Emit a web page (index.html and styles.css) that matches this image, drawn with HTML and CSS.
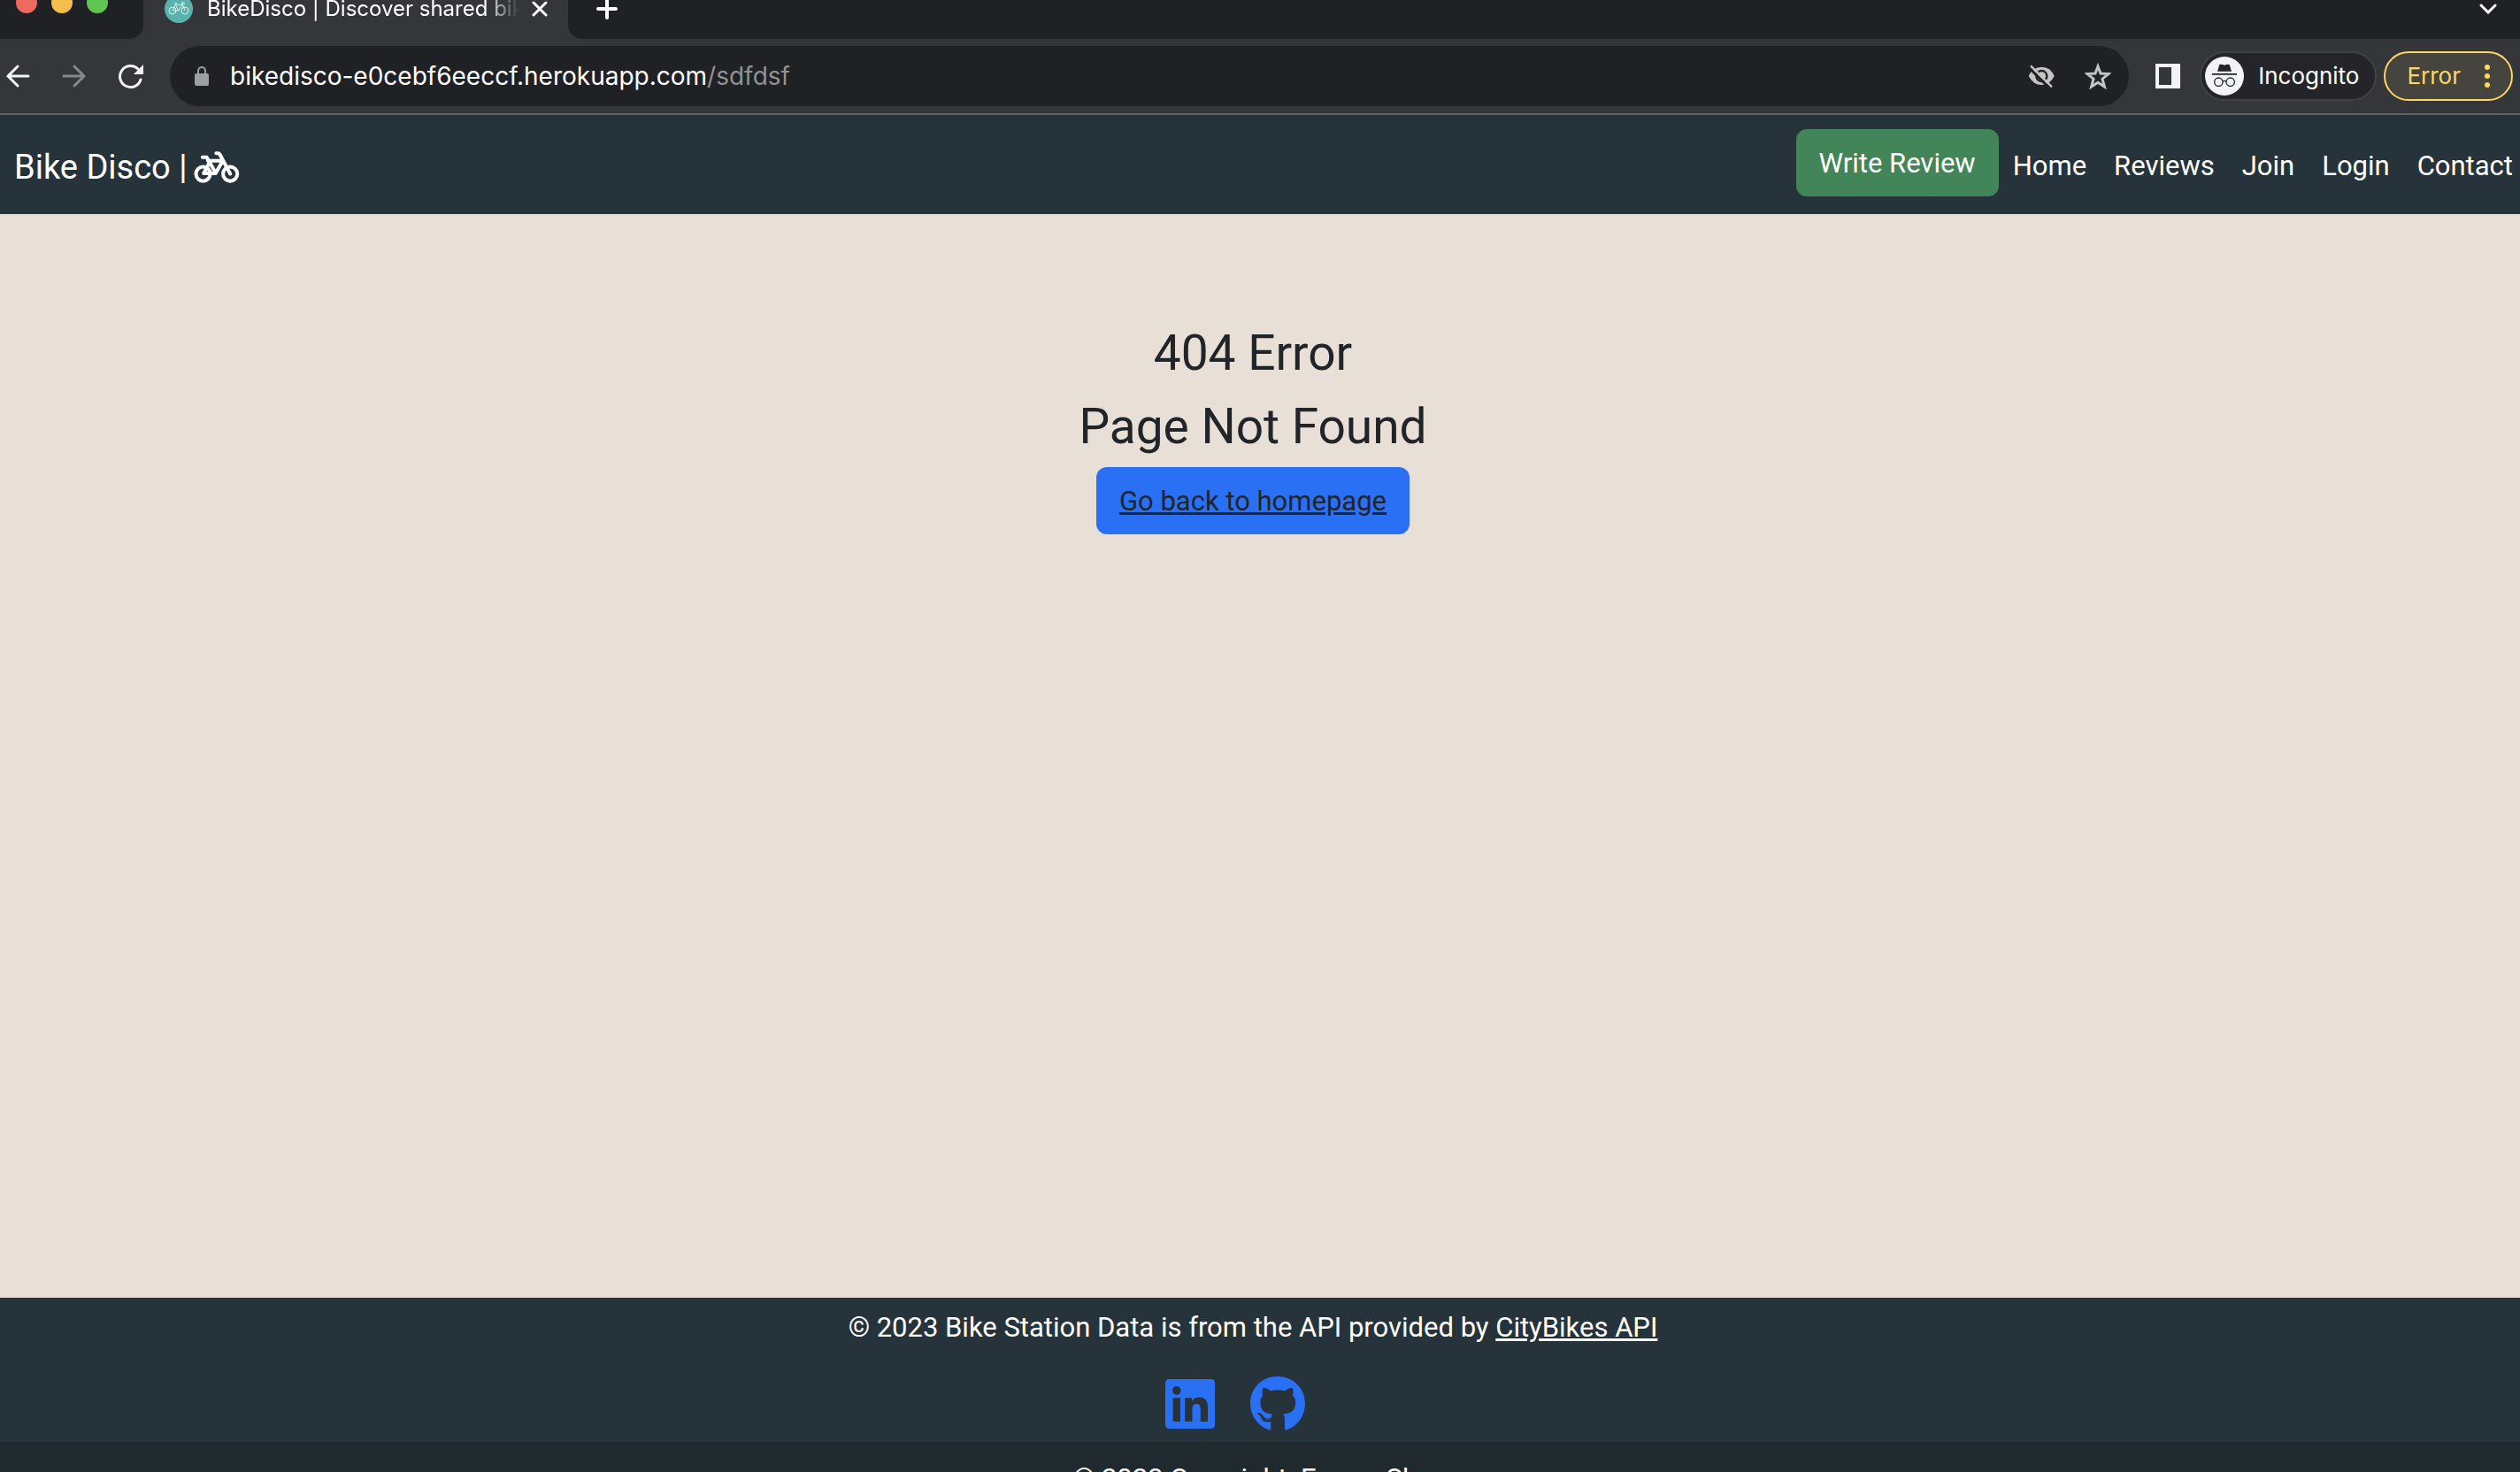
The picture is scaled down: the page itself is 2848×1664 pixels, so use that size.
FILE: index.html
```html
<!DOCTYPE html>
<html lang="en">
<head>
<meta charset="utf-8">
<title>BikeDisco | Discover shared bikes</title>
<link rel="stylesheet" href="styles.css">
</head>
<body>
<div class="window">
  <div class="tabstrip">
    <div class="tabstrip-lead">
      <div class="lights">
        <span class="light light-close"></span>
        <span class="light light-min"></span>
        <span class="light light-max"></span>
      </div>
    </div>
    <div class="tab">
      <svg class="favicon" viewBox="0 0 96 96" aria-hidden="true">
        <circle cx="48" cy="48" r="48" fill="#5bb1ac"/>
        <g fill="none" stroke="#e4f3f1" stroke-width="3">
          <circle cx="27" cy="54" r="12"/><circle cx="69" cy="54" r="12"/>
          <path d="M27 54l10-20h24L47 54H27M37 34l10 20M33 29h10M57 27h9q4 4-1 6M59 27l10 27"/>
        </g>
      </svg>
      <span class="tab-title">BikeDisco | Discover shared bikes</span>
      <button class="icon-button" aria-label="Close tab">
        <svg class="icon-close" viewBox="0 0 18 18"><path d="M2 2l14 14M16 2L2 16"/></svg>
      </button>
    </div>
    <div class="tabstrip-rest">
      <button class="icon-button" aria-label="New tab">
        <svg class="icon-plus" viewBox="0 0 24 24"><path d="M12 2v20M2 12h20"/></svg>
      </button>
      <button class="icon-button" aria-label="Search tabs">
        <svg class="icon-chevron" viewBox="0 0 20 12"><path d="M2 2l8 8 8-8"/></svg>
      </button>
    </div>
  </div>

  <div class="toolbar">
    <div class="history">
      <button class="icon-button" aria-label="Back">
        <svg class="icon-arrow" viewBox="0 0 28 28"><path d="M26 14H3M14 3L3 14l11 11"/></svg>
      </button>
      <button class="icon-button" aria-label="Forward" disabled>
        <svg class="icon-arrow icon-dim" viewBox="0 0 28 28"><path d="M2 14h23M14 3l11 11-11 11"/></svg>
      </button>
      <button class="icon-button" aria-label="Reload">
        <svg class="icon-reload" viewBox="0 0 28 28"><path class="stroke" d="M25 18A12 12 0 1 1 22 6"/><path class="fill" d="M28 1v11H17z"/></svg>
      </button>
    </div>
    <div class="address">
      <svg class="icon-lock" viewBox="0 0 16 22" aria-hidden="true"><path class="stroke" d="M4 9V5a4 4 0 0 1 8 0v4"/><rect class="fill" y="8" width="16" height="14" rx="2"/></svg>
      <span class="url">bikedisco-e0cebf6eeccf.herokuapp.com<span class="url-path">/sdfdsf</span></span>
      <button class="icon-button" aria-label="Third-party cookies blocked">
        <svg class="icon-eye" viewBox="0 0 90 78">
          <path class="fill" d="M2 39Q16 8 46 8t43 31Q74 69 46 69T2 39z"/>
          <circle cx="46" cy="39" r="18" fill="none" stroke="#202124" stroke-width="7"/>
          <path d="M2 9l72 72" stroke="#202124" stroke-width="9"/>
          <path class="stroke" d="M9 4l72 72"/>
        </svg>
      </button>
      <button class="icon-button" aria-label="Bookmark this page">
        <svg class="icon-star" viewBox="0 0 30 30"><path d="M15 4l3 8 9 .6-7 5.600 2.400 8.800-7.400-4.800-7.400 4.800L10 18.200 3 12.600l9-.6z"/></svg>
      </button>
    </div>
    <button class="icon-button" aria-label="Side panel">
      <svg class="icon-panel" viewBox="0 0 28 28"><path fill-rule="evenodd" d="M0 0h28v28H0zM4 4v20h14V4z"/></svg>
    </button>
    <div class="pills">
      <button class="pill pill-incognito">
        <svg class="avatar" viewBox="0 0 132 132" aria-hidden="true">
          <circle cx="66" cy="66" r="66" fill="#f1f3f4"/>
          <path fill="#252428" d="M42 50l7-23q8-2 17 2 9-4 17-2l7 23zM24 57h84v5H24z"/>
          <g fill="none" stroke="#252428" stroke-width="4"><circle cx="46" cy="86" r="14"/><circle cx="86" cy="86" r="14"/><path d="M60 84q6-4 12 0"/></g>
        </svg>
        Incognito
      </button>
      <button class="pill pill-error">
        Error
        <svg class="icon-dots" viewBox="0 0 6 26" aria-hidden="true"><circle cx="3" cy="3" r="3"/><circle cx="3" cy="13" r="3"/><circle cx="3" cy="23" r="3"/></svg>
      </button>
    </div>
  </div>

  <div class="viewport">
    <nav class="navbar">
      <a class="brand" href="#">Bike Disco |
        <svg class="icon-bike" viewBox="60 90 152 107" aria-hidden="true">
          <g fill="none" stroke="#fff" stroke-width="12" stroke-linecap="round" stroke-linejoin="round">
            <circle cx="90" cy="166" r="24"/><circle cx="181" cy="166" r="24"/>
            <path d="M181 166l-34-64q-2-5-8-5h-5M88 110h14l30 52M106 122h50M156 122l-24 42H92l20-38"/>
          </g>
        </svg>
      </a>
      <div class="nav-items">
        <button class="button button-review">Write Review</button>
        <ul class="nav-links">
          <li><a href="#">Home</a></li>
          <li><a href="#">Reviews</a></li>
          <li><a href="#">Join</a></li>
          <li><a href="#">Login</a></li>
          <li><a href="#">Contact</a></li>
        </ul>
      </div>
    </nav>

    <main class="content">
      <h1>404 Error</h1>
      <h1>Page Not Found</h1>
      <a class="button button-home" href="#">Go back to homepage</a>
    </main>

    <footer class="footer">
      <p class="credit">© 2023 Bike Station Data is from the API provided by <a href="#">CityBikes API</a></p>
      <div class="social">
        <a href="#" aria-label="LinkedIn"><svg class="icon-linkedin" viewBox="0 0 448 512"><path d="M416 32H31.900C14.300 32 0 46.500 0 64.300v383.400C0 465.500 14.300 480 31.900 480H416c17.600 0 32-14.500 32-32.300V64.300c0-17.800-14.400-32.300-32-32.300zM135.400 416H69V202.200h66.500V416zm-33.200-243c-21.300 0-38.500-17.300-38.500-38.500S80.900 96 102.200 96c21.200 0 38.500 17.300 38.500 38.500 0 21.300-17.200 38.500-38.500 38.500zm282.100 243h-66.400V312c0-24.800-.5-56.700-34.500-56.700-34.600 0-39.900 27-39.900 54.900V416h-66.400V202.200h63.700v29.200h.9c8.900-16.800 30.600-34.500 62.900-34.500 67.200 0 79.700 44.300 79.700 101.900V416z"/></svg></a>
        <a href="#" aria-label="GitHub"><svg class="icon-github" viewBox="0 0 496 512"><path d="M165.900 397.400c0 2-2.300 3.600-5.200 3.600-3.300.3-5.600-1.300-5.600-3.600 0-2 2.300-3.600 5.200-3.600 3-.3 5.600 1.300 5.600 3.600zm-31.100-4.500c-.7 2 1.300 4.300 4.300 4.900 2.600 1 5.600 0 6.200-2s-1.300-4.300-4.300-5.200c-2.600-.7-5.500.3-6.200 2.300zm44.200-1.700c-2.900.7-4.900 2.600-4.600 4.900.3 2 2.900 3.300 5.900 2.600 2.900-.7 4.900-2.600 4.600-4.600-.3-1.900-3-3.200-5.900-2.900zM244.800 8C106.100 8 0 113.300 0 252c0 110.900 69.800 205.800 169.500 239.200 12.800 2.300 17.300-5.600 17.300-12.100 0-6.200-.3-40.400-.3-61.400 0 0-70 15-84.700-29.800 0 0-11.400-29.100-27.800-36.600 0 0-22.900-15.700 1.600-15.400 0 0 24.900 2 38.600 25.800 21.900 38.600 58.600 27.500 72.900 20.900 2.300-16 8.800-27.100 16-33.700-55.900-6.200-112.300-14.300-112.300-110.500 0-27.500 7.600-41.300 23.600-58.900-2.600-6.500-11.100-33.300 2.600-67.900 20.900-6.500 69 27 69 27 20-5.600 41.500-8.500 62.800-8.500s42.800 2.900 62.800 8.500c0 0 48.100-33.600 69-27 13.700 34.700 5.200 61.400 2.600 67.900 16 17.700 25.800 31.500 25.800 58.900 0 96.500-58.900 104.200-114.800 110.500 9.200 7.900 17 22.900 17 46.400 0 33.700-.3 75.400-.3 83.600 0 6.500 4.600 14.400 17.300 12.100C428.200 457.800 496 362.900 496 252 496 113.300 383.500 8 244.800 8z"/></svg></a>
      </div>
      <div class="copyright">© 2023 Copyright: Emma Shu</div>
    </footer>
  </div>
</div>
</body>
</html>
```

FILE: styles.css
```css
* { box-sizing: border-box; }

body {
  margin: 0;
  background: #e8dfd6;
  color: #212529;
  font-family: Roboto, "Liberation Sans", sans-serif;
  font-size: 31px;
  line-height: 48px;
}

button { font: inherit; color: inherit; border: 0; cursor: pointer; }
svg { display: block; flex: none; }

.window {
  display: flex;
  flex-direction: column;
  height: 100vh;
  overflow: hidden;
}

.viewport { flex: 1; min-height: 0; overflow: hidden; }

/* Browser tab strip */
.tabstrip,
.toolbar {
  flex: none;
  display: flex;
  background: #35363a;
  color: #fff;
  font-family: Inter, "Liberation Sans", sans-serif;
}

.tabstrip { height: 44px; }

.tabstrip-lead,
.tabstrip-rest { background: #202124; }

.tabstrip-lead {
  width: 162px;
  padding-left: 18px;
  border-bottom-right-radius: 16px;
}

.tabstrip-rest {
  flex: 1;
  display: flex;
  align-items: center;
  justify-content: space-between;
  padding: 0 26px 24px 32px;
  border-bottom-left-radius: 16px;
}

.lights { display: flex; align-items: center; gap: 16px; height: 6px; }
.light { flex: none; width: 24px; height: 24px; border-radius: 50%; }
.light-close { background: #ed6a5e; }
.light-min { background: #f5bf4f; }
.light-max { background: #61c554; }

.tab {
  width: 480px;
  display: flex;
  align-items: center;
  padding: 0 23px 24px 24px;
}

.favicon { width: 32px; height: 32px; }

.tab-title {
  flex: 1;
  margin: 0 14px 0 16px;
  overflow: hidden;
  white-space: nowrap;
  font-size: 24px;
  mask-image: linear-gradient(to left, transparent, #000 40px);
}

.icon-button {
  flex: none;
  padding: 0;
  background: none;
  line-height: 0;
}

.icon-close, .icon-plus, .icon-chevron, .icon-arrow {
  fill: none;
  stroke: #fff;
  stroke-width: 3;
  stroke-linecap: round;
}
.icon-close { width: 18px; height: 18px; }
.icon-plus { width: 24px; height: 24px; stroke-width: 4; }
.icon-chevron { width: 20px; height: 12px; }

/* Browser toolbar */
.toolbar {
  height: 86px;
  align-items: center;
  padding: 0 8px 0 6px;
  border-bottom: 2px solid #5f6064;
}

.history { display: flex; align-items: center; gap: 36px; margin-right: 30px; }
.icon-arrow { width: 28px; height: 28px; stroke: #f1f3f4; }
.icon-dim { stroke: #87888a; }
.icon-reload { width: 28px; height: 28px; overflow: visible; }
.icon-reload .stroke { fill: none; stroke: #f1f3f4; stroke-width: 3; stroke-linecap: round; }
.icon-reload .fill { fill: #f1f3f4; }

.address {
  flex: 1;
  display: flex;
  align-items: center;
  height: 68px;
  padding: 0 20px 0 28px;
  border-radius: 34px;
  background: #202124;
}

.icon-lock { width: 16px; height: 22px; }
.icon-lock .stroke { fill: none; stroke: #9aa0a6; stroke-width: 2; }
.icon-lock .fill { fill: #9aa0a6; }
.url { flex: 1; margin-left: 24px; font-size: 28px; }
.url-path { color: #919294; }

.icon-eye { width: 30px; height: 26px; margin-right: 34px; }
.icon-eye .fill { fill: #c4c4c4; }
.icon-eye .stroke { stroke: #c4c4c4; stroke-width: 7; }
.icon-star { width: 30px; height: 30px; fill: none; stroke: #c4c4c4; stroke-width: 3; }
.icon-panel { width: 28px; height: 28px; margin: 0 22px 0 30px; fill: #f1f3f4; }

.pills { display: flex; gap: 8px; }

.pill {
  display: flex;
  align-items: center;
  height: 56px;
  border-radius: 28px;
  font-size: 26px;
}

.pill-incognito {
  gap: 16px;
  padding: 0 18px 0 4px;
  border: 2px solid #404145;
  background: #252428;
}

.pill-error {
  gap: 27px;
  padding: 0 24px;
  border: 2px solid #fdd663;
  background: #46443e;
  color: #fdd663;
}

.avatar { width: 44px; height: 44px; }
.icon-dots { width: 6px; height: 26px; fill: #fdd663; }

/* Site navigation */
.navbar {
  display: flex;
  align-items: center;
  justify-content: space-between;
  padding: 16px 8px 20px 16px;
  background: #26333a;
  color: #fff;
}

.brand {
  display: flex;
  align-items: center;
  gap: 8px;
  padding-top: 10px;
  color: inherit;
  font-size: 38px;
  text-decoration: none;
}

.icon-bike { width: 52px; height: 36px; }

.nav-items { display: flex; align-items: center; gap: 16px; }

.nav-links {
  display: flex;
  gap: 31px;
  margin: 0;
  padding: 8px 0 0;
  list-style: none;
}

.nav-links a { color: inherit; text-decoration: none; }

.button {
  display: inline-block;
  padding: 15px 26px 13px;
  border-radius: 12px;
}

.button-review { background: #428559; }

/* Error message */
.content {
  display: flex;
  flex-direction: column;
  align-items: center;
  min-height: calc(100vh - 439px);
  padding: 116px 16px 0 0;
}

h1 {
  margin: 0;
  font-size: 55px;
  font-weight: 400;
  line-height: 83px;
}

.button-home {
  margin-top: 4px;
  background: #2970f5;
  color: #212529;
}

/* Footer */
.footer {
  background: #26333a;
  color: #fff;
  text-align: center;
}

.credit {
  margin: 0;
  padding: 10px 16px 30px 0;
}

.credit a { color: inherit; }

.social {
  display: flex;
  justify-content: center;
  padding: 0 16px 11px 0;
}

.social a { margin-right: 40px; }
.social svg { height: 64px; fill: #2970f5; }
.icon-linkedin { width: 56px; }
.icon-github { width: 62px; }

.copyright {
  padding: 18px 16px 18px 0;
  background: #1f292e;
}
```
